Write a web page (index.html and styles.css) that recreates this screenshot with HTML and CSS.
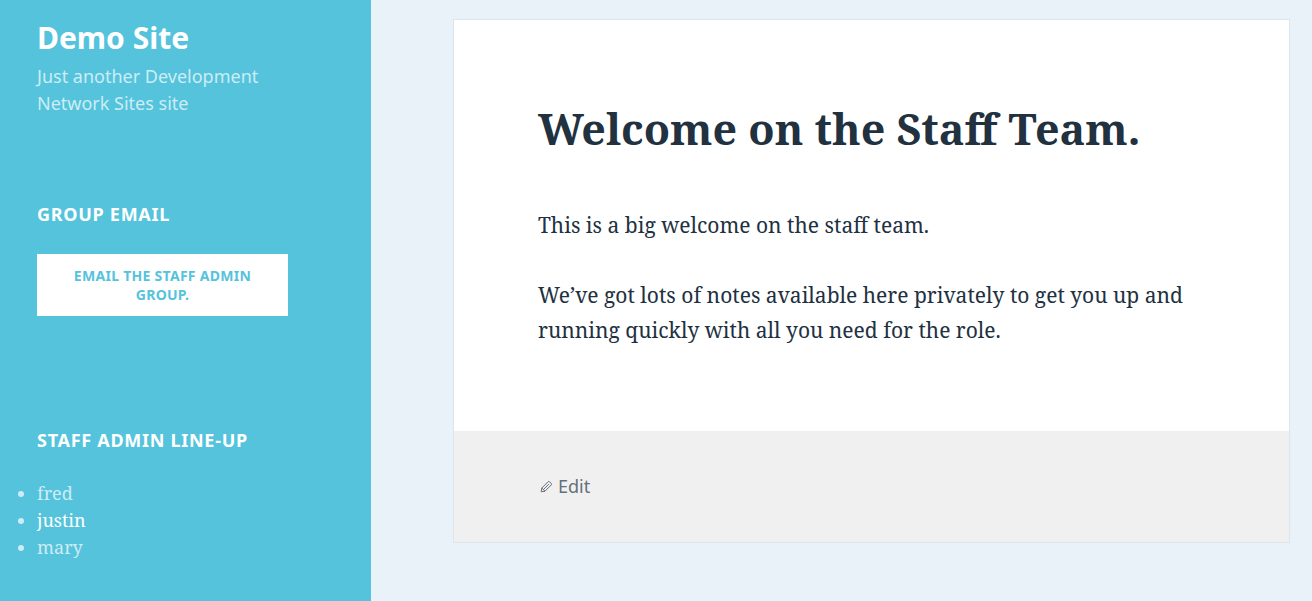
FILE: index.html
```html
<!DOCTYPE html>
<html lang="en">
<head>
<meta charset="utf-8">
<meta name="viewport" content="width=device-width, initial-scale=1">
<title>Welcome on the Staff Team. – Demo Site</title>
<link rel="stylesheet" href="styles.css">
</head>
<body>
<div class="site">
  <aside class="sidebar">
    <header class="branding">
      <p class="site-title">Demo Site</p>
      <p class="site-description">Just another Development Network Sites site</p>
    </header>
    <section class="widget">
      <h2 class="widget-title">Group Email</h2>
      <button class="email-button" type="button">Email the Staff Admin Group.</button>
    </section>
    <section class="widget">
      <h2 class="widget-title">Staff Admin Line-up</h2>
      <ul class="members">
        <li>fred</li>
        <li><span class="current">justin</span></li>
        <li>mary</li>
      </ul>
    </section>
  </aside>
  <main class="content">
    <article class="entry">
      <div class="entry-body">
        <h1 class="entry-title">Welcome on the Staff Team.</h1>
        <p>This is a big welcome on the staff team.</p>
        <p>We’ve got lots of notes available here privately to get you up and running quickly with all you need for the role.</p>
      </div>
      <footer class="entry-footer">
        <a class="edit-link" href="#">
          <svg class="edit-icon" viewBox="0 0 16 16" aria-hidden="true"><path d="M3.200 12.800l.6-3.800 6.200-6.200q.8-.6 1.600 0l1.600 1.600q.6.8 0 1.600L7 12.200zM5.400 10.600l5.400-5.400M3.800 9L7 12.200"/></svg>
          <span>Edit</span>
        </a>
      </footer>
    </article>
  </main>
</div>
</body>
</html>
```
FILE: styles.css
```css
* { box-sizing: border-box; }
body { margin: 0; background: #e9f1f9; color: #22313f; font-family: "Noto Serif", "Droid Serif", serif; }
p, h1, h2, ul { margin: 0; }
.site { display: grid; grid-template-columns: 371px 1fr; min-height: 100vh; }
.sidebar { background: #55c3dc; color: #fff; padding: 20px 83px 40px 37px; }
.site-title { font: 700 30px/36px "Noto Sans", sans-serif; }
.site-description { margin-top: 7px; font: 400 18px/27px "Noto Sans", sans-serif; color: #ccedf5; }
.widget { margin-top: 84px; }
.widget + .widget { margin-top: 111px; }
.widget-title { font: 700 18px/27px "Noto Sans", sans-serif; text-transform: uppercase; letter-spacing: 0.04em; white-space: nowrap; }
.email-button { width: 100%; margin-top: 26px; padding: 12px 30px; border: 0; background: #fff; color: #55c3dc; font: 700 14px/19px "Noto Sans", sans-serif; text-transform: uppercase; letter-spacing: 0.02em; }
.members { margin-top: 26px; padding: 0; font-size: 18px; line-height: 27px; color: #ccedf5; }
.current { color: #fff; }
.content { padding: 19px 22px 58px 82px; }
.entry { background: #fff; border: 1px solid #dde6ed; }
.entry-body { padding: 83px 84px; font-size: 21px; line-height: 35px; }
.entry-title { margin-bottom: 53px; font-size: 43px; line-height: 52px; }
.entry-body p + p { margin-top: 35px; }
.entry-footer { background: #f0f0f0; padding: 42px 84px; }
.edit-link { display: inline-flex; align-items: center; gap: 4px; color: #646f79; font: 400 18px/27px "Noto Sans", sans-serif; text-decoration: none; }
.edit-icon { width: 16px; height: 16px; fill: none; stroke: currentColor; }
```
